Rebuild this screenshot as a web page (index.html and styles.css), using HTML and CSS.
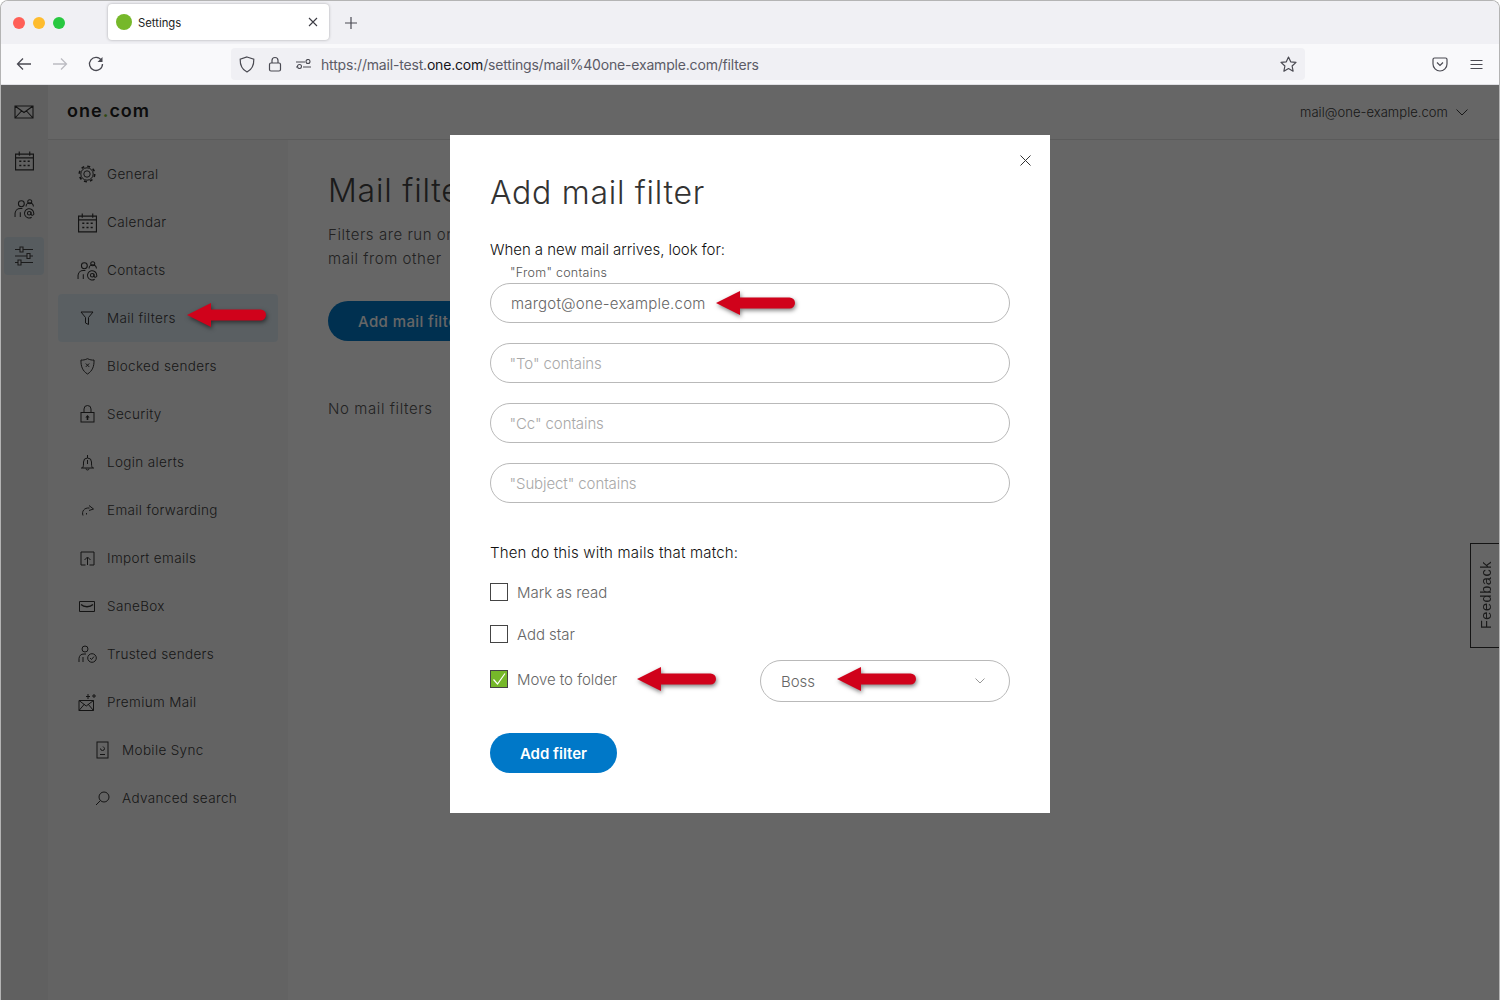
FILE: index.html
```html
<!DOCTYPE html>
<html lang="en">
<head>
<meta charset="utf-8">
<title>Settings</title>
<link rel="stylesheet" href="styles.css">
</head>
<body>
<svg class="defs" aria-hidden="true">
  <symbol id="i-cal" viewBox="0 0 20 20"><path d="M1.500 4h17v15h-17zM1.500 7.500h17M5 1.500V5.500M15 1.500V5.500" fill="none" stroke="currentColor" stroke-width="1.100"/><path d="M5 10h2v1.500H5zM9 10h2v1.500H9zM13 10h2v1.500h-2zM5 14h2v1.500H5zM9 14h2v1.500H9zM13 14h2v1.500h-2z" fill="currentColor"/></symbol>
  <symbol id="i-people" viewBox="0 0 20 20"><g fill="none" stroke="currentColor" stroke-width="1"><circle cx="7" cy="5.500" r="2.800"/><circle cx="15" cy="3.500" r="1.900"/><path d="M1 18v-3.500a5 5 0 0 1 5-4.500h2M6 13.500V18M11.500 8a3.500 3.500 0 0 1 7 0"/><circle cx="14.500" cy="14.500" r="1.700"/><path d="M16.200 13v2.500a1.300 1.300 0 0 0 2.600-1 4.400 4.400 0 1 0-2 3.800"/></g></symbol>
  <symbol id="i-arrow" viewBox="0 0 79 24"><path d="M0 12 24 0v6.500h49.500a5.500 5.500 0 0 1 0 11H24V24z" fill="#d0021b"/></symbol>
</svg>

<div class="window">
  <div class="tabstrip">
    <div class="lights"><span class="light red"></span><span class="light amber"></span><span class="light green"></span></div>
    <div class="tab">
      <span class="favicon"></span>
      <span class="tab-title">Settings</span>
      <svg class="tab-close" width="10" height="10" viewBox="0 0 10 10"><path d="M1 1l8 8M9 1l-8 8" stroke="#3c3c44" stroke-width="1.100"/></svg>
    </div>
    <svg class="tab-new" width="14" height="14" viewBox="0 0 14 14"><path d="M7 1v12M1 7h12" stroke="#4a4a52" stroke-width="1.200"/></svg>
  </div>

  <div class="toolbar">
    <div class="nav-buttons">
      <svg width="16" height="16" viewBox="0 0 16 16"><path d="M15 8H1.500M7 2.500 1.500 8 7 13.500" fill="none" stroke="#4a4a52" stroke-width="1.300"/></svg>
      <svg width="16" height="16" viewBox="0 0 16 16"><path d="M1 8h13.500M9 2.500 14.500 8 9 13.500" fill="none" stroke="#bcbcc2" stroke-width="1.300"/></svg>
      <svg width="16" height="16" viewBox="0 0 16 16"><path d="M13.500 4.500A6.500 6.500 0 1 0 14.500 8" fill="none" stroke="#4a4a52" stroke-width="1.300"/><path d="M14.500 1v5h-5z" fill="#4a4a52"/></svg>
    </div>
    <div class="urlbar">
      <svg width="16" height="17" viewBox="0 0 16 17"><path d="M8 1 14.800 3.200C15 9 13 13.500 8 16 3 13.500 1 9 1.200 3.200z" fill="none" stroke="#4a4a52" stroke-width="1.200"/></svg>
      <svg width="14" height="16" viewBox="0 0 14 16"><rect x="1.500" y="7" width="11" height="8" rx="1.500" fill="none" stroke="#4a4a52" stroke-width="1.200"/><path d="M4 7V4.500a3 3 0 0 1 6 0V7" fill="none" stroke="#4a4a52" stroke-width="1.200"/></svg>
      <svg class="perm" width="15" height="10" viewBox="0 0 15 10"><path d="M0 3h9M0 8h1M7 8h8" stroke="#4a4a52" stroke-width="1.100"/><circle cx="12" cy="2.500" r="2" fill="none" stroke="#4a4a52" stroke-width="1.100"/><circle cx="3.500" cy="7.500" r="2" fill="none" stroke="#4a4a52" stroke-width="1.100"/></svg>
      <div class="url">https://mail-test.<b>one.com</b>/settings/mail%40one-example.com/filters</div>
      <svg class="star" width="17" height="16" viewBox="0 0 17 16"><path d="M8.500 1l2.200 4.800 5.300.6-3.900 3.600 1 5.200-4.600-2.600-4.600 2.600 1-5.200L1 6.400l5.300-.6z" fill="none" stroke="#4a4a52" stroke-width="1.200" stroke-linejoin="round"/></svg>
    </div>
    <div class="tool-end">
      <svg width="16" height="15" viewBox="0 0 16 15"><path d="M1 2.500A1.500 1.500 0 0 1 2.500 1h11A1.500 1.500 0 0 1 15 2.500V7a7 7 0 0 1-14 0z" fill="none" stroke="#4a4a52" stroke-width="1.200"/><path d="M5 5.500 8 8.500l3-3" fill="none" stroke="#4a4a52" stroke-width="1.200"/></svg>
      <svg width="13" height="11" viewBox="0 0 13 11"><path d="M0.500 1.500h12M0.500 5.500h12M0.500 9.500h12" stroke="#4a4a52" stroke-width="1"/></svg>
    </div>
  </div>

  <div class="app">
    <nav class="rail">
      <div class="rail-item"><svg width="20" height="16" viewBox="0 0 20 16"><path d="M1 2h18v12H1zM1 2l9 6.500L19 2M1 14l6.500-7M19 14l-6.500-7" fill="none" stroke="currentColor" stroke-width="1.100"/></svg></div>
      <div class="rail-item"><svg width="21" height="21"><use href="#i-cal"/></svg></div>
      <div class="rail-item"><svg width="21" height="21"><use href="#i-people"/></svg></div>
      <div class="rail-item rail-active"><svg width="20" height="20" viewBox="0 0 20 20"><path d="M1 3.500h18M1 10h18M1 16.500h18" stroke="currentColor" stroke-width="1.100"/><path d="M6 1h3v5H6zM13 7.500h3v5h-3zM4 14h3v5H4z" fill="#e8eef2" stroke="currentColor" stroke-width="1.100"/></svg></div>
    </nav>

    <div class="main">
      <header class="app-header">
        <div class="logo">one<span class="logo-dot">.</span>com</div>
        <div class="account">mail@one-example.com
          <svg width="12" height="7" viewBox="0 0 12 7"><path d="M.5.500 6 6 11.500.500" fill="none" stroke="currentColor"/></svg>
        </div>
      </header>
      <div class="app-body">
        <aside class="sidebar">
          <a class="side-item"><span class="side-icon"><svg width="18" height="18" viewBox="0 0 18 18"><g fill="none" stroke="currentColor"><circle cx="9" cy="9" r="6.200"/><circle cx="9" cy="9" r="7.700" stroke-width="1.600" stroke-dasharray="3 3.050"/><circle cx="9" cy="9" r="3.200"/></g></svg></span>General</a>
          <a class="side-item"><span class="side-icon"><svg width="21" height="21"><use href="#i-cal"/></svg></span>Calendar</a>
          <a class="side-item"><span class="side-icon"><svg width="21" height="21"><use href="#i-people"/></svg></span>Contacts</a>
          <a class="side-item side-active"><span class="side-icon"><svg width="14" height="14" viewBox="0 0 14 14"><path d="M1 1h12L8.500 6.500V13.500L5.500 12V6.500z" fill="none" stroke="currentColor"/></svg></span>Mail filters</a>
          <a class="side-item"><span class="side-icon"><svg width="15" height="17" viewBox="0 0 15 17"><path d="M1 2c2 .3 4-.2 6.500-1.300C10 1.800 12 2.300 14 2c.3 6-1.500 11-6.500 14C2.500 13 .7 8 1 2z" fill="none" stroke="currentColor"/><path d="M5.800 5.500l3.400 3.400M9.200 5.500 5.800 8.900" stroke="currentColor"/></svg></span>Blocked senders</a>
          <a class="side-item"><span class="side-icon"><svg width="15" height="18" viewBox="0 0 15 18"><rect x="1" y="7.500" width="13" height="9.500" fill="none" stroke="currentColor"/><path d="M4 7.500V4a3.500 3.500 0 0 1 7 0v3.500" fill="none" stroke="currentColor"/><path d="M7.500 10l2.200 2.500H8.300V15H6.700v-2.500H5.300z" fill="currentColor"/></svg></span>Security</a>
          <a class="side-item"><span class="side-icon"><svg width="15" height="17" viewBox="0 0 15 17"><path d="M1 14h13M2.500 14c1-1.500 1-3 1-6a4 4 0 0 1 8 0c0 3 0 4.500 1 6M6 14.500a1.500 1.500 0 0 0 3 0M7.500 1v3M7.500 6v4" fill="none" stroke="currentColor"/></svg></span>Login alerts</a>
          <a class="side-item"><span class="side-icon"><svg width="13" height="13" viewBox="0 0 13 13"><path d="M2 11.500C.500 7.500 3 3.500 8.500 4" fill="none" stroke="currentColor"/><path d="M8 1.500l4.500 3.500L8 6.500" fill="none" stroke="currentColor"/><path d="M5.500 10.500v-1.500" stroke="currentColor"/></svg></span>Email forwarding</a>
          <a class="side-item"><span class="side-icon"><svg width="15" height="15" viewBox="0 0 15 15"><path d="M9.500 14H14V1H1v13h4.500M7.500 14V6.500M4.500 9l3-3 3 3" fill="none" stroke="currentColor"/></svg></span>Import emails</a>
          <a class="side-item"><span class="side-icon"><svg width="16" height="11" viewBox="0 0 16 11"><path d="M.5.500h15v10H.5z" fill="none" stroke="currentColor"/><path d="M2 3.500c3 3 9 3 12 0" fill="none" stroke="currentColor" stroke-width="1.300"/></svg></span>SaneBox</a>
          <a class="side-item"><span class="side-icon"><svg width="19" height="18" viewBox="0 0 19 18"><circle cx="7" cy="4" r="3" fill="none" stroke="currentColor"/><path d="M1 17v-3.500A5 5 0 0 1 6 9h2M5 12v5" fill="none" stroke="currentColor"/><circle cx="14" cy="13" r="4.300" fill="none" stroke="currentColor"/><path d="M12 13l1.500 1.500 2.500-3" fill="none" stroke="currentColor"/></svg></span>Trusted senders</a>
          <a class="side-item"><span class="side-icon"><svg width="19" height="18" viewBox="0 0 19 18"><path d="M1 7.500h14.500v10H1zM1 7.500l7.250 5.500L15.500 7.500M1 17.500l5.500-6.500M15.500 17.500 10 11" fill="none" stroke="currentColor"/><path d="M10 1v5M8 3.500h4M16 1v4M14 3h4" stroke="currentColor"/></svg></span>Premium Mail</a>
          <a class="side-item side-sub"><span class="side-icon"><svg width="13" height="18" viewBox="0 0 13 18"><rect x="1" y="1" width="11" height="16" fill="none" stroke="currentColor"/><path d="M4 13.500h5" stroke="currentColor"/><path d="M4.500 7.500a2 2 0 1 0 4 0c0-1-1-1-1.500-2" fill="none" stroke="currentColor"/></svg></span>Mobile Sync</a>
          <a class="side-item side-sub"><span class="side-icon"><svg width="15" height="15" viewBox="0 0 15 15"><circle cx="9" cy="6" r="5" fill="none" stroke="currentColor"/><path d="M5.500 9.500 1 14" stroke="currentColor"/></svg></span>Advanced search</a>
        </aside>
        <section class="content">
          <h1 class="page-title">Mail filters</h1>
          <p class="page-text">Filters are run on<br>mail from other</p>
          <button class="page-button" type="button">Add mail filter</button>
          <p class="page-empty">No mail filters</p>
        </section>
      </div>
    </div>
    <div class="feedback"><span>Feedback</span></div>

    <div class="overlay">
      <div class="modal">
        <svg class="modal-close" width="11" height="11" viewBox="0 0 11 11"><path d="M.5.500l10 10M10.500.500l-10 10" stroke="#333" stroke-width="1"/></svg>
        <h2 class="modal-title">Add mail filter</h2>
        <p class="modal-lead">When a new mail arrives, look for:</p>
        <div class="field-label">"From" contains</div>
        <div class="fields">
          <div class="pill pill-filled">margot@one-example.com</div>
          <div class="pill pill-empty">"To" contains</div>
          <div class="pill pill-empty">"Cc" contains</div>
          <div class="pill pill-empty">"Subject" contains</div>
        </div>
        <p class="modal-lead modal-lead-2">Then do this with mails that match:</p>
        <div class="check-row"><span class="box"></span>Mark as read</div>
        <div class="check-row"><span class="box"></span>Add star</div>
        <div class="check-row check-row-last">
          <span class="box box-on"><svg width="16" height="16" viewBox="0 0 16 16"><path d="M2.500 8.500 6.500 13 14 2.500" fill="none" stroke="#fff" stroke-width="1.200"/></svg></span>Move to folder
          <div class="select">Boss<svg width="10" height="6" viewBox="0 0 10 6"><path d="M.5.500 5 5 9.500.500" fill="none" stroke="#999"/></svg></div>
        </div>
        <button class="submit" type="button">Add filter</button>
      </div>
    </div>

    <svg class="arrow arrow-side"><use href="#i-arrow"/></svg>
    <svg class="arrow arrow-from"><use href="#i-arrow"/></svg>
    <svg class="arrow arrow-move"><use href="#i-arrow"/></svg>
    <svg class="arrow arrow-boss"><use href="#i-arrow"/></svg>
  </div>
</div>
</body>
</html>
```

FILE: styles.css
```css
* { box-sizing: border-box; }
html, body { margin: 0; height: 100%; overflow: hidden; background: #fff; }
body { font-family: Inter, "Open Sans", sans-serif; }
.defs { position: absolute; width: 0; height: 0; }

.window { width: 1500px; height: 1000px; display: flex; flex-direction: column; border: 1px solid #b4b4b4; border-bottom: 0; border-radius: 8px 8px 0 0; overflow: hidden; }

.tabstrip { height: 43px; flex: none; display: flex; align-items: center; background: #f0f0f4; }
.lights { width: 107px; padding-left: 12px; display: flex; gap: 8px; }
.light { width: 12px; height: 12px; border-radius: 50%; }
.red { background: #ff5f57; }
.amber { background: #febc2e; }
.green { background: #28c840; }
.tab { width: 221px; height: 36px; margin-top: -1px; padding: 0 11px 0 8px; display: flex; align-items: center; background: #fff; border-radius: 4px; box-shadow: 0 0 3px rgba(0,0,0,.3); }
.favicon { width: 16px; height: 16px; border-radius: 50%; background: #76b82a; margin-right: 6px; }
.tab-title { flex: 1; padding-top: 2px; font-size: 11.300px; color: #222; }
.tab-new { margin-left: 15px; }

.toolbar { height: 41px; flex: none; display: flex; align-items: center; background: #f9f9fb; border-bottom: 1px solid #e0e0e4; }
.nav-buttons { width: 230px; padding-left: 15px; display: flex; gap: 20px; }
.urlbar { width: 1074px; height: 32px; display: flex; align-items: center; gap: 13px; padding: 0 8px; background: #f0f0f4; border-radius: 4px; }
.perm { margin-left: 1px; }
.url { flex: 1; margin-left: -3px; font-size: 14px; color: #5b5b66; letter-spacing: -.18px; white-space: nowrap; }
.url b { font-weight: 400; color: #15141a; }
.tool-end { flex: 1; display: flex; justify-content: flex-end; align-items: center; gap: 22px; padding-right: 16px; }

.app { position: relative; flex: 1; display: flex; min-height: 0; background: #fff; color: #555; }
.rail { width: 47px; flex: none; padding-top: 3px; background: #f0f0f0; color: #333; }
.rail-item { height: 48px; padding-right: 1px; display: flex; align-items: center; justify-content: center; }
.rail-active { width: 40px; height: 38px; margin: 5px 0 0 3px; background: #d9e6ee; border-radius: 4px; color: #444; }

.main { flex: 1; display: flex; flex-direction: column; min-width: 0; }
.app-header { height: 55px; flex: none; display: flex; align-items: center; justify-content: space-between; padding: 0 31px 0 19px; border-bottom: 1px solid #e4e4e4; }
.logo { margin-top: -3px; font-size: 18px; font-weight: 600; letter-spacing: 1px; color: #222; }
.logo-dot { color: #76b82a; }
.account { display: flex; align-items: center; gap: 8px; font-size: 13px; font-weight: 300; letter-spacing: .05px; color: #3c3c3c; }

.app-body { flex: 1; display: flex; min-height: 0; }
.sidebar { width: 240px; flex: none; padding: 10px; background: #f8f8f8; }
.side-item { height: 48px; display: flex; align-items: center; padding-left: 18px; font-size: 13.500px; font-weight: 300; letter-spacing: .36px; color: #3c3c3c; border-radius: 4px; }
.side-active { background: #e2eef6; }
.side-icon { width: 22px; margin-right: 9px; display: flex; justify-content: center; align-items: center; color: #333; }
.side-sub { padding-left: 33px; }

.content { flex: 1; padding: 31px 40px; }
.page-title { margin: 0; font-size: 32px; font-weight: 300; letter-spacing: .8px; line-height: 40px; color: #444; }
.page-text { margin: 12px 0 0; font-size: 15px; font-weight: 300; letter-spacing: .55px; line-height: 24px; }
.page-button { display: block; height: 40px; width: 170px; margin-top: 30px; padding: 0 30px; text-align: left; border: 0; border-radius: 20px; background: #0078c8; color: #fff; font: 500 15px Inter, sans-serif; letter-spacing: .4px; }
.page-empty { margin: 56px 0 0; font-size: 15px; font-weight: 300; letter-spacing: .6px; line-height: 24px; }

.feedback { position: absolute; right: 0; top: 458px; width: 29px; height: 105px; padding-left: 2px; display: flex; align-items: center; justify-content: center; border: 1px solid #333; border-right: 0; background: #fff; }
.feedback span { writing-mode: vertical-rl; transform: rotate(180deg); font: 14.500px "Liberation Sans", sans-serif; letter-spacing: .55px; color: #444; }

.overlay { position: absolute; inset: 0; display: flex; justify-content: center; align-items: flex-start; padding-top: 50px; background: rgba(0,0,0,.6); }
.modal { position: relative; width: 600px; padding: 38px 40px 40px; background: #fff; color: #333; }
.modal-close { position: absolute; top: 20px; right: 19px; }
.modal-title { margin: 0; font-size: 32px; font-weight: 300; line-height: 40px; letter-spacing: .72px; color: #333; }
.modal-lead { margin: 27px 0 0; font-size: 15px; font-weight: 300; line-height: 20px; letter-spacing: -.04px; color: #111; }
.field-label { margin: 5px 0 0 20px; font-size: 12.500px; font-weight: 300; line-height: 16px; letter-spacing: .27px; color: #555; }
.fields { margin-top: 2px; display: flex; flex-direction: column; gap: 20px; }
.pill { height: 40px; padding: 0 20px; display: flex; align-items: center; border: 1px solid #b9b9b9; border-radius: 20px; font-size: 15px; font-weight: 300; }
.pill-filled { color: #666; letter-spacing: .2px; }
.pill-empty { padding-left: 18.500px; color: #a8a8a8; letter-spacing: -.1px; }
.modal-lead-2 { margin-top: 40px; letter-spacing: .18px; }
.check-row { height: 18px; margin-top: 24px; display: flex; align-items: center; font-size: 15px; font-weight: 300; letter-spacing: -.05px; color: #666; }
.modal-lead-2 + .check-row { margin-top: 20px; }
.check-row-last { position: relative; margin-top: 27px; }
.box { width: 18px; height: 18px; flex: none; margin-right: 9px; border: 1px solid #444; background: #fff; }
.box-on { background: #76b82a; border-color: #444; display: flex; }
.select { position: absolute; left: 270px; top: -10px; width: 250px; height: 42px; padding: 0 24px 0 20px; display: flex; align-items: center; justify-content: space-between; background: #fff; border: 1px solid #b9b9b9; border-radius: 21px; }
.submit { display: block; width: 127px; height: 40px; margin-top: 45px; border: 0; border-radius: 20px; background: #0078c8; color: #fff; font: 600 15px Inter, sans-serif; }

.arrow { position: absolute; width: 79px; height: 24px; filter: drop-shadow(1px 2px 2px rgba(0,0,0,.5)); }
.arrow-side { left: 186px; top: 218px; }
.arrow-from { left: 715px; top: 206px; }
.arrow-move { left: 636px; top: 582px; }
.arrow-boss { left: 836px; top: 582px; }
```
